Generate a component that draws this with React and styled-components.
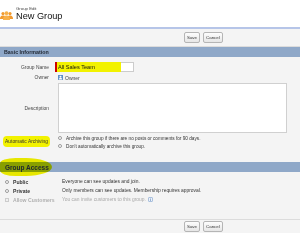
import styled, { createGlobalStyle } from 'styled-components';

const GlobalStyle = createGlobalStyle`
  html, body {
    margin: 0;
    padding: 0;
    background: #fff;
    font-family: 'Liberation Sans', Arial, sans-serif;
    color: #222;
  }
`;

export default function App() {
  return (
    <>
      <GlobalStyle />
      <Page>
        <Header>
          <GroupIcon />
          <Titles>
            <SubTitle>Group Edit</SubTitle>
            <Title>New Group</Title>
          </Titles>
        </Header>
        <Panel>
          <ButtonBar>
            <Button>Save</Button>
            <Button>Cancel</Button>
          </ButtonBar>
          <SectionBar>Basic Information</SectionBar>
          <Fields>
            <Label>Group Name</Label>
            <InputWrap>
              <Required />
              <Input><Marked>All Sales Team</Marked></Input>
            </InputWrap>

            <Label>Owner</Label>
            <OwnerCell>
              <OwnerIcon />
              <span>Owner</span>
            </OwnerCell>

            <Label>Description</Label>
            <TextArea />

            <Label><LabelMark>Automatic Archiving</LabelMark></Label>
            <Options>
              <Option><Radio />Archive this group if there are no posts or comments for 90 days.</Option>
              <Option><Radio checked />Don&apos;t automatically archive this group.</Option>
            </Options>
          </Fields>
          <SectionBar big>
            <BarMark />
            <BarText>Group Access</BarText>
          </SectionBar>
          <Access>
            <AccessLabel><Radio checked />Public</AccessLabel>
            <AccessText>Everyone can see updates and join.</AccessText>
            <AccessLabel><Radio />Private</AccessLabel>
            <AccessText>Only members can see updates. Membership requires approval.</AccessText>
            <AccessLabel muted><Check />Allow Customers</AccessLabel>
            <AccessText muted>You can invite customers to this group. <Info>i</Info></AccessText>
          </Access>
          <ButtonBar bottom>
            <Button>Save</Button>
            <Button>Cancel</Button>
          </ButtonBar>
        </Panel>
      </Page>
    </>
  );
}

function GroupIcon() {
  return (
    <svg width="13" height="9" viewBox="0 0 13 9">
      <circle cx="3" cy="2.6" r="1.6" fill="#f29a2e" />
      <circle cx="10" cy="2.6" r="1.6" fill="#f29a2e" />
      <path d="M0 8 C0 5 1.5 4.4 3 4.4 C4.5 4.4 6 5 6 8 Z" fill="#f29a2e" />
      <path d="M7 8 C7 5 8.5 4.4 10 4.4 C11.5 4.4 13 5 13 8 Z" fill="#f29a2e" />
      <circle cx="6.5" cy="2.2" r="1.9" fill="#f7b04a" />
      <path d="M3 9 C3 5.4 4.8 4.4 6.5 4.4 C8.2 4.4 10 5.4 10 9 Z" fill="#f7b04a" />
    </svg>
  );
}

function OwnerIcon() {
  return (
    <OwnerBox>
      <svg width="5" height="5" viewBox="0 0 5 5">
        <circle cx="2.5" cy="1.7" r="1" fill="#fff" />
        <path d="M0.8 4.6 C0.8 3.2 1.6 2.9 2.5 2.9 C3.4 2.9 4.2 3.2 4.2 4.6 Z" fill="#fff" />
      </svg>
    </OwnerBox>
  );
}

const Page = styled.div`
  width: 300px;
  height: 243px;
  background: #fff;
  overflow: hidden;
`;

const Header = styled.header`
  height: 29px;
  display: flex;
  align-items: flex-end;
  gap: 3px;
  box-sizing: border-box;
  border-bottom: 2px solid #b6c5e8;
  padding: 0 0 6px 0;

  svg {
    margin-bottom: 1px;
  }
`;

const Titles = styled.div`
  display: flex;
  flex-direction: column;
`;

const SubTitle = styled.div`
  font-size: 4.3px;
  color: #444;
  line-height: 5px;
`;

const Title = styled.div`
  font-size: 9.2px;
  line-height: 10px;
  color: #111;
`;

const Panel = styled.div`
  background: #f4f4f4;
`;

const ButtonBar = styled.div`
  display: flex;
  gap: 3px;
  padding-left: 184px;
  align-items: center;
  box-sizing: border-box;
  border-bottom: ${p => (p.bottom ? 'none' : '1px solid #dcdcdc')};
  border-top: ${p => (p.bottom ? '1px solid #dcdcdc' : 'none')};
  height: ${p => (p.bottom ? '14px' : '18px')};
`;

const Button = styled.div`
  height: 11px;
  padding: 0 2px;
  display: flex;
  align-items: center;
  border: 1px solid #b5b5b5;
  border-radius: 2px;
  background: linear-gradient(#fdfdfd, #e6e6e6);
  font-size: 4.4px;
  color: #333;
  box-sizing: border-box;
`;

const SectionBar = styled.div`
  position: relative;
  height: 10px;
  background: #8fa8c8;
  display: flex;
  align-items: center;
  padding-left: ${p => (p.big ? '5px' : '4px')};
  font-weight: bold;
  font-size: ${p => (p.big ? '6.5px' : '5.3px')};
  color: #1e2530;
`;

const BarMark = styled.span`
  position: absolute;
  left: 0;
  top: -4px;
  width: 52px;
  height: 18px;
  border-radius: 30% 50% 50% 30%;
  background: #f2f200;
  mix-blend-mode: multiply;
`;

const BarText = styled.span`
  position: relative;
`;

const Fields = styled.div`
  display: grid;
  grid-template-columns: 49px 1fr;
  column-gap: 6px;
  padding: 5px 13px 13px 0;
  font-size: 5px;
  align-items: center;
`;

const Label = styled.div`
  text-align: right;
  color: #444;
  font-size: 4.9px;
`;

const LabelMark = styled.span`
  display: inline-block;
  background: #f2f200;
  padding: 3px 2px;
  margin-right: -1px;
  border-radius: 4px;
  color: #333;
`;

const InputWrap = styled.div`
  display: flex;
  height: 10px;
`;

const Required = styled.span`
  width: 2px;
  background: #c00;
`;

const Input = styled.div`
  width: 77px;
  background: #fff;
  border: 1px solid #ccc;
  box-sizing: border-box;
  display: flex;
  align-items: stretch;
`;

const Marked = styled.span`
  background: #f2f200;
  width: 63px;
  font-size: 5.6px;
  color: #111;
  display: flex;
  align-items: center;
  padding-left: 1px;
  margin: -1px 0 -1px -1px;
`;

const OwnerCell = styled.div`
  display: flex;
  align-items: center;
  gap: 2px;
  height: 11px;
  padding-left: 3px;
  font-size: 5px;
  color: #444;
`;

const OwnerBox = styled.span`
  width: 5px;
  height: 5px;
  background: #5d8fc9;
  display: flex;
`;

const TextArea = styled.div`
  margin-left: 3px;
  height: 50px;
  background: #fff;
  border: 1px solid #d0d0d0;
  box-sizing: border-box;
`;

const Options = styled.div`
  display: flex;
  flex-direction: column;
  gap: 2px;
  padding: 2px 0 0 3px;
`;

const Option = styled.div`
  display: flex;
  align-items: center;
  gap: 4px;
  font-size: 4.7px;
  color: #333;
  height: 6px;
`;

const Radio = styled.span`
  flex: none;
  width: 4px;
  height: 4px;
  border-radius: 50%;
  border: 0.6px solid #9a9a9a;
  background: ${p => (p.checked ? 'radial-gradient(circle, #444 0 32%, #fff 42%)' : '#fff')};
  box-sizing: border-box;
`;

const Check = styled.span`
  flex: none;
  width: 4px;
  height: 4px;
  border: 0.6px solid #ccc;
  background: #f0f0f0;
  box-sizing: border-box;
`;

const Access = styled.div`
  display: grid;
  grid-template-columns: 62px 1fr;
  grid-auto-rows: 9px;
  align-items: center;
  padding: 5px 0 15px 0;
`;

const AccessLabel = styled.div`
  display: flex;
  align-items: center;
  gap: 4px;
  padding-left: 5px;
  font-size: 5.1px;
  font-weight: bold;
  color: ${p => (p.muted ? '#b0b0b0' : '#333')};
`;

const AccessText = styled.div`
  display: flex;
  align-items: center;
  gap: 2px;
  font-size: 4.9px;
  color: ${p => (p.muted ? '#a8a8a8' : '#333')};
  white-space: nowrap;
`;

const Info = styled.span`
  width: 5px;
  height: 5px;
  border: 0.6px solid #aac0dd;
  border-radius: 1px;
  background: #eef3fa;
  color: #4a78b0;
  font-size: 3.6px;
  font-weight: bold;
  display: flex;
  align-items: center;
  justify-content: center;
  box-sizing: border-box;
`;
